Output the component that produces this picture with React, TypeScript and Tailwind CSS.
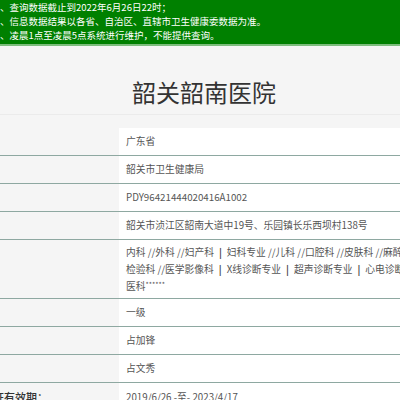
const notices = [
  '、查询数据截止到2022年6月26日22时；',
  '、信息数据结果以各省、自治区、直辖市卫生健康委数据为准。',
  '、凌晨1点至凌晨5点系统进行维护，不能提供查询。',
];

const rows: { label: string; value: string }[] = [
  { label: '', value: '广东省' },
  { label: '', value: '韶关市卫生健康局' },
  { label: '', value: 'PDY96421444020416A1002' },
  { label: '', value: '韶关市浈江区韶南大道中19号、乐园镇长乐西坝村138号' },
];

const rows2: { label: string; value: string }[] = [
  { label: '', value: '一级' },
  { label: '', value: '占加锋' },
  { label: '', value: '占文秀' },
];

const Row = ({ label, value, last }: { label: string; value: string; last?: boolean }) => (
  <div className={`flex h-[28px] ${last ? '' : 'border-b border-[#8ea8a1]'}`}>
    <div className="w-[119px] shrink-0 flex items-center text-[11px] text-[#333]">
      {label && <span className="ml-[-7px] whitespace-nowrap font-medium">{label}</span>}
    </div>
    <div className="flex-1 bg-white flex items-center pl-[7px] text-[9.75px] text-[#555] whitespace-nowrap overflow-hidden">
      {value}
    </div>
  </div>
);

const Bar = () => <span className="mx-[5px] font-bold text-[#444]">|</span>;

const App = () => {
  return (
    <div className="min-h-screen w-[400px] overflow-hidden bg-[#f5f5f5] font-['Noto_Sans_CJK_SC',sans-serif]">
      <div className="bg-[#008000] text-white text-[9.5px] leading-[14px] pb-[2px] border-b-2 border-[#7dbd7d]">
        {notices.map((n) => (
          <div key={n} className="whitespace-nowrap">{n}</div>
        ))}
      </div>

      <div className="pt-[30px] pb-[6px] border-b border-[#ebebeb] text-center">
        <h1 className="text-[24px] leading-[32px] text-[#333] font-normal pl-[8px]">韶关韶南医院</h1>
      </div>

      <div className="mt-[13px]">
        {rows.map((r) => (
          <Row key={r.value} label={r.label} value={r.value} />
        ))}

        <div className="flex border-b border-[#8ea8a1]">
          <div className="w-[119px] shrink-0" />
          <div className="flex-1 bg-white pl-[7px] pt-[4px] pb-[2px] text-[9.75px] leading-[17px] text-[#555] whitespace-nowrap overflow-hidden">
            <div>
              内科 //外科 //妇产科<Bar />妇科专业 //儿科 //口腔科 //皮肤科 //麻醉科
            </div>
            <div>
              检验科 //医学影像科<Bar />X线诊断专业<Bar />超声诊断专业<Bar />心电诊断专业
            </div>
            <div>
              医科<span className="text-[7px] relative -top-[3px]">******</span>
            </div>
          </div>
        </div>

        {rows2.map((r) => (
          <Row key={r.value} label={r.label} value={r.value} />
        ))}
        <Row label="证有效期：" value="2019/6/26 -至- 2023/4/17" last />
      </div>
    </div>
  );
};

export default App;
